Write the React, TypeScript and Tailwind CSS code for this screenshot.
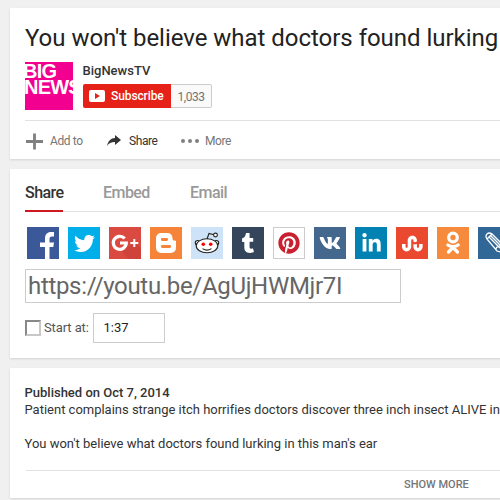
import React from 'react';
import { FaTwitter, FaVk, FaTumblr, FaPinterest, FaLinkedinIn, FaStumbleupon } from 'react-icons/fa';

const tile = 'flex h-8 w-8 shrink-0 items-center justify-center overflow-hidden';

function ShareIcons() {
  return (
    <div className="ml-[2px] mt-[15px] flex h-8 gap-[9px] text-white">
      <div className={`${tile} bg-[#3b5998]`}>
        <svg viewBox="0 0 32 32" className="h-8 w-8"><path fill="#fff" d="M18 32V20h-5v-4.500h5V12c0-5 2.500-7 6-7h3v4.500h-2c-2 0-2.500 1-2.500 2.700v3.300H27l-.7 4.500h-3.800v12z" /></svg>
      </div>
      <div className={`${tile} bg-[#00aeea]`}><FaTwitter size={21} /></div>
      <div className={`${tile} bg-[#db4a40]`}>
        <svg viewBox="0 0 32 32" className="h-8 w-8">
          <path fill="#c83f38" d="M10 22 20 32h12V22l-4-5z" opacity=".6" />
          <path d="M15.700 11.500A6.500 6.500 0 1 0 17.300 16H11" fill="none" stroke="#fff" strokeWidth="3.200" />
          <path d="M25.300 12v8M21.300 16h8" stroke="#fff" strokeWidth="2" />
        </svg>
      </div>
      <div className={`${tile} bg-[#f6833a]`}>
        <svg viewBox="0 0 32 32" className="h-8 w-8">
          <path fill="#fff" d="M11 6h6.500a5 5 0 0 1 5 5c0 2 .5 2.500 2 2.500 1 0 1.500.5 1.500 1.500v6a5 5 0 0 1-5 5H11a5 5 0 0 1-5-5V11a5 5 0 0 1 5-5z" />
          <path d="M12.300 12.500h4.400M12.300 19.500h7.400" stroke="#f6833a" strokeWidth="2.800" strokeLinecap="round" />
        </svg>
      </div>
      <div className={`${tile} bg-[#cee3f7]`}>
        <svg viewBox="0 0 32 32" className="h-8 w-8" stroke="#222" strokeWidth="1.100">
          <circle cx="6.600" cy="15.800" r="2.300" fill="#fff" /><circle cx="25.400" cy="15.800" r="2.300" fill="#fff" />
          <ellipse cx="16" cy="18.800" rx="10.800" ry="7" fill="#fff" />
          <path d="m16 12 2-5.500 5 1.200" fill="none" /><circle cx="24.500" cy="8" r="1.900" fill="#fff" />
          <circle cx="12.300" cy="17.300" r="1.800" fill="#f00" stroke="none" /><circle cx="19.700" cy="17.300" r="1.800" fill="#f00" stroke="none" />
          <path d="M11.500 21.600q4.500 3 9 0" fill="none" />
        </svg>
      </div>
      <div className={`${tile} bg-[#35465c]`}><FaTumblr size={20} /></div>
      <div className={`${tile} border border-[#ccc] bg-white`}><FaPinterest size={22} color="#cb2030" /></div>
      <div className={`${tile} bg-[#44678d]`}><FaVk size={22} /></div>
      <div className={`${tile} bg-[#0282b2]`}><FaLinkedinIn size={21} /></div>
      <div className={`${tile} bg-[#eb4830]`}><FaStumbleupon size={21} /></div>
      <div className={`${tile} bg-[#f68b3d]`}>
        <svg viewBox="0 0 32 32" className="h-8 w-8" fill="none" stroke="#fff" strokeWidth="3.200" strokeLinecap="round">
          <circle cx="16" cy="10.500" r="4.300" /><path d="M10.800 18q5.200 3.200 10.400 0M16 20.500l-4.500 4.500M16 20.500l4.500 4.500" />
        </svg>
      </div>
      <div className={`${tile} bg-[#306797]`}>
        <svg viewBox="0 0 32 32" className="h-8 w-8" fill="none" stroke="#fff" strokeWidth="1.300">
          <path d="m9 12 5-5 11 11 1 8-7-2zM9 12q-2-3 0-5t5 0M11 10l11 11M12.500 8.500l11 11M18 23q0-4 3-3 0-3 4-2" />
        </svg>
      </div>
    </div>
  );
}

export default function App() {
  return (
    <div className="h-[500px] w-[500px] overflow-hidden bg-[#f0f0f0] pl-[10px] pt-2 font-['Roboto',sans-serif] text-[#222]">
      <main className="flex w-[860px] flex-col gap-[10px]">
        <section className="h-[151px] bg-white pl-[15px] shadow-[0_1px_2px_rgba(0,0,0,0.12)]">
          <h1 className="h-[54px] whitespace-nowrap pt-[16px] text-[24px] leading-[28px] tracking-[-0.03px]">You won't believe what doctors found lurking in this man's ear</h1>
          <div className="flex h-[59px] border-b border-[#e2e2e2]">
            <div className="h-12 w-12 shrink-0 overflow-hidden bg-[#f2008f] pt-[1px] font-['Liberation_Sans',sans-serif] text-[20px] font-bold leading-[16px] tracking-[-0.8px] text-white">
              <div className="-ml-[2px]">BIG</div>
              <div className="-ml-[1px]">NEWS</div>
            </div>
            <div className="ml-[9.500px]">
              <div className="h-[22px] pt-[1px] text-[13px] font-medium leading-[16px] text-[#333]">BigNewsTV</div>
              <div className="ml-[0.500px] flex h-6 w-[129px] text-[12px] leading-[25px]">
                <div className="flex w-[88px] items-center rounded-l-[2px] bg-[#e62117] pl-[6px] font-medium tracking-[-0.1px] text-white">
                  <svg viewBox="0 0 16 12" className="mr-[6px] h-3 w-4 shrink-0"><rect width="16" height="12" rx="2" fill="#fff" /><path d="m6 3 5 3-5 3z" fill="#e62117" /></svg>
                  Subscribe
                </div>
                <div className="flex-1 rounded-r-[2px] border border-l-0 border-[#ccc] bg-[#fafafa] text-center text-[12px] leading-[24px] tracking-[-0.5px] text-[#737373]">1,033</div>
              </div>
            </div>
          </div>
          <div className="flex h-[38px] items-center pt-px text-[12px] tracking-[-0.4px] text-[#767676]">
            <svg viewBox="0 0 18 18" className="ml-[1px] mr-[7px] h-[18px] w-[17px]"><path d="M9 1v17M0 9.500h18" stroke="#808080" strokeWidth="3" /></svg>
            <span className="w-[57px]">Add to</span>
            <svg viewBox="0 0 14 11" className="mr-[8px] h-[11px] w-[14px]"><path d="M0 11C1 6 4 3 8 3V0l6 5-6 5V7C4 7 2 8 0 11z" fill="#333" /></svg>
            <span className="w-[52px] text-[#333]">Share</span>
            <svg viewBox="0 0 18 4" className="mr-[6px] h-1 w-[18px]" fill="#808080"><circle cx="2" cy="2" r="2" /><circle cx="9" cy="2" r="2" /><circle cx="16" cy="2" r="2" /></svg>
            <span>More</span>
          </div>
        </section>

        <section className="h-[189px] bg-white pl-[15px] shadow-[0_1px_2px_rgba(0,0,0,0.12)]">
          <div className="flex h-[43px] gap-[40px] border-b border-[#e2e2e2] text-[16px] font-medium leading-[18px] tracking-[-0.55px] text-[#999]">
            <div className="-mb-px w-[38px] border-b-2 border-[#cc181e] pt-[15px] text-[#333]">Share</div>
            <div className="w-[47px] pt-[15px]">Embed</div>
            <div className="pt-[15px]">Email</div>
          </div>
          <ShareIcons />
          <div className="mt-[10px] h-[34px] w-[376px] border border-[#ccc] pl-[2px] text-[24px] leading-[33px] tracking-[-0.32px] text-[#666]">https://youtu.be/AgUjHWMjr7I</div>
          <div className="mt-[10px] flex h-[30px] items-center text-[13px] text-[#555]">
            <div className="mr-[3px] h-4 w-4 border-2 border-[#c8c8c8] border-l-[#888] border-t-[#888] bg-white" />
            <span className="w-[49px] whitespace-nowrap tracking-[-0.1px]">Start at:</span>
            <div className="h-[30px] w-[72px] border border-[#ccc] pl-[9.500px] leading-[28px] text-[#222]">1:37</div>
          </div>
        </section>

        <section className="h-[130px] bg-white pl-[14.500px] pt-4 text-[13px] leading-[17px] text-[#333] shadow-[0_1px_2px_rgba(0,0,0,0.12)]">
          <div className="font-medium">Published on Oct 7, 2014</div>
          <p className="whitespace-nowrap tracking-[-0.01px]">Patient complains strange itch horrifies doctors discover three inch insect ALIVE in his ear</p>
          <p className="mt-[17px] whitespace-nowrap tracking-[-0.01px]">You won't believe what doctors found lurking in this man's ear</p>
          <div className="ml-[1.500px] mt-[18px] border-t border-[#e2e2e2] pl-[378px] pt-[5px] text-[11px] font-medium text-[#767676]">SHOW MORE</div>
        </section>
      </main>
    </div>
  );
}
